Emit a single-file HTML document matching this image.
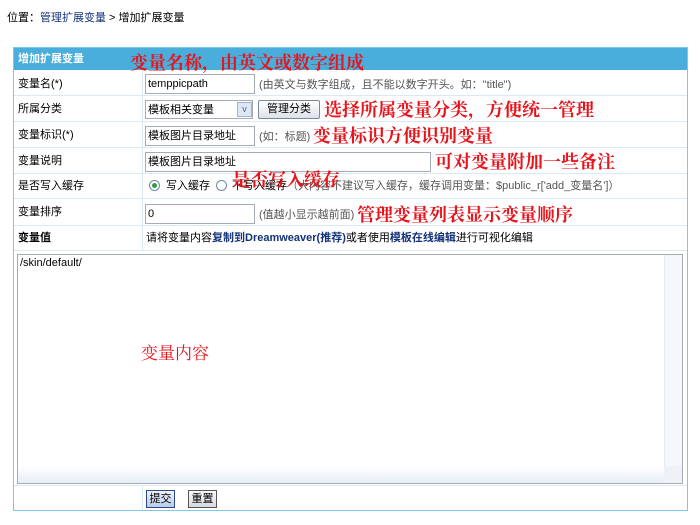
<!DOCTYPE html>
<html><head><meta charset="utf-8"><style>
*{margin:0;padding:0;box-sizing:border-box}
body{width:700px;height:525px;background:#fff;position:relative;overflow:hidden;font-family:"Liberation Sans","Noto Sans CJK SC",sans-serif;font-size:11px;color:#000}
.a{position:absolute;white-space:nowrap;line-height:13px}
.red{color:#e8141c;font-family:"Noto Serif CJK SC",serif;font-size:18px;line-height:20px;font-weight:bold}
.inp{position:absolute;height:20px;border:1px solid #a5acb5;background:#fff;padding:3px 2px;font-size:11px;line-height:13px}
.gray{color:#555}
.hl{position:absolute;left:14px;width:673px;height:1px;background:#dbe9f3}
b.blue{color:#14337a}
</style></head><body>
<div class="a" style="left:7px;top:12px">位置：<span style="color:#14337a">管理扩展变量</span> &gt; 增加扩展变量</div>
<div class="a" style="left:13px;top:47px;width:675px;height:464px;border:1px solid #7fc6e3"></div>
<div class="a" style="left:14px;top:48px;width:673px;height:22px;background:#4aaedc"></div>
<div class="a" style="left:18px;top:53px;color:#fff;font-weight:bold">增加扩展变量</div>
<div class="a" style="left:142px;top:70px;width:1px;height:181px;background:#dbe9f3"></div>
<div class="a" style="left:142px;top:485px;width:1px;height:25px;background:#dbe9f3"></div>
<div class="hl" style="top:95px"></div><div class="hl" style="top:121px"></div><div class="hl" style="top:147px"></div><div class="hl" style="top:173px"></div><div class="hl" style="top:198px"></div><div class="hl" style="top:225px"></div><div class="hl" style="top:250px"></div><div class="hl" style="top:485px"></div>
<div class="a" style="left:18px;top:78px">变量名(*)</div>
<div class="a" style="left:18px;top:103px">所属分类</div>
<div class="a" style="left:18px;top:129px">变量标识(*)</div>
<div class="a" style="left:18px;top:155px">变量说明</div>
<div class="a" style="left:18px;top:180px">是否写入缓存</div>
<div class="a" style="left:18px;top:206px">变量排序</div>
<div class="a" style="left:18px;top:232px;font-weight:bold">变量值</div>
<div class="inp" style="left:145px;top:74px;width:110px">temppicpath</div>
<div class="a gray" style="left:259px;top:79px">(由英文与数字组成，且不能以数字开头。如："title")</div>
<div class="inp" style="left:145px;top:100px;width:108px;height:19px">模板相关变量</div>
<div class="a" style="left:237px;top:102px;width:15px;height:15px;background:#dce6f4;border:1px solid #9fb3d3;color:#4d6185;font-size:9px;text-align:center;line-height:13px">v</div>
<div class="a" style="left:258px;top:100px;width:62px;height:19px;border:1px solid #7d8a9c;background:linear-gradient(#fff,#dde2ea);border-radius:2px;text-align:center;line-height:17px">管理分类</div>
<div class="inp" style="left:145px;top:126px;width:110px">模板图片目录地址</div>
<div class="a gray" style="left:259px;top:131px">(如：标题)</div>
<div class="inp" style="left:145px;top:152px;width:286px">模板图片目录地址</div>
<div class="a" style="left:149px;top:180px;width:11px;height:11px;border:1px solid #6e8aa8;border-radius:50%;background:#fff"></div>
<div class="a" style="left:152px;top:183px;width:5px;height:5px;border-radius:50%;background:#2c9e3a"></div>
<div class="a" style="left:166px;top:180px">写入缓存</div>
<div class="a" style="left:216px;top:180px;width:11px;height:11px;border:1px solid #6e8aa8;border-radius:50%"></div>
<div class="a" style="left:232px;top:180px">不写入缓存<span class="gray">（大内容不建议写入缓存，缓存调用变量：$public_r['add_变量名']）</span></div>
<div class="inp" style="left:145px;top:204px;width:110px">0</div>
<div class="a gray" style="left:259px;top:209px">(值越小显示越前面)</div>
<div class="a" style="left:146px;top:232px">请将变量内容<b class="blue">复制到Dreamweaver(推荐)</b>或者使用<b class="blue">模板在线编辑</b>进行可视化编辑</div>
<div class="a" style="left:17px;top:254px;width:666px;height:230px;border:1px solid #a5acb5"></div>
<div class="a" style="left:20px;top:257px">/skin/default/</div>
<div class="a" style="left:664px;top:255px;width:18px;height:212px;background:#f4f7fb;border-left:1px solid #e3e9f1"></div>
<div class="a" style="left:18px;top:466px;width:646px;height:17px;background:linear-gradient(#fff,#e6edf7)"></div>
<div class="a" style="left:664px;top:466px;width:18px;height:17px;background:#eef1f5"></div>
<div class="a red" style="left:141px;top:342px;font-weight:normal;font-size:17px">变量内容</div>
<div class="a" style="left:146px;top:490px;width:29px;height:18px;border:1px solid #2b4a86;background:linear-gradient(#eef3fb,#b9cbe8);text-align:center;line-height:16px">提交</div>
<div class="a" style="left:188px;top:490px;width:29px;height:18px;border:1px solid #555;background:linear-gradient(#fafafa,#d5d9e0);text-align:center;line-height:16px">重置</div>
<div class="a red" style="left:130px;top:52px">变量名称，由英文或数字组成</div>
<div class="a red" style="left:324px;top:99px">选择所属变量分类，方便统一管理</div>
<div class="a red" style="left:313px;top:125px">变量标识方便识别变量</div>
<div class="a red" style="left:435px;top:151px">可对变量附加一些备注</div>
<div class="a red" style="left:232px;top:169px">是否写入缓存</div>
<div class="a red" style="left:357px;top:204px">管理变量列表显示变量顺序</div>
</body></html>
